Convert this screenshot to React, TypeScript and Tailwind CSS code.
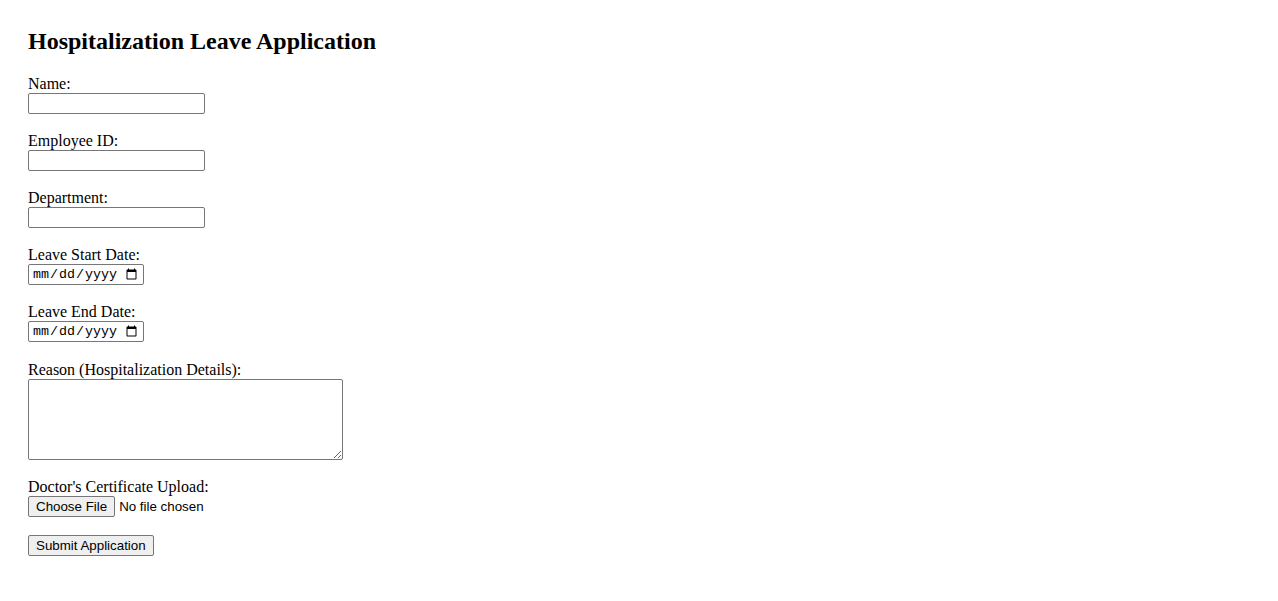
import React from 'react';

const fields = [
    { id: 'name', label: 'Name:', type: 'text' },
    { id: 'employeeId', label: 'Employee ID:', type: 'text' },
    { id: 'department', label: 'Department:', type: 'text' },
    { id: 'startDate', label: 'Leave Start Date:', type: 'date' },
    { id: 'endDate', label: 'Leave End Date:', type: 'date' },
];

const App: React.FC = () => {
    return (
        <div className="min-h-screen bg-white text-black px-[28px] pt-[27px] font-['Liberation_Serif',_'Times_New_Roman',_serif]">
            <h2 className="text-[24px] leading-[28px] font-bold mb-[21px]">Hospitalization Leave Application</h2>

            <form className="flex flex-col items-start" onSubmit={(e) => e.preventDefault()}>
                {fields.map((field, i) => (
                    <div key={field.id} className={i === fields.length - 1 ? 'flex flex-col items-start mb-[20px]' : 'flex flex-col items-start mb-[19px]'}>
                        <label htmlFor={field.id} className="block text-[16px] leading-[15px] pb-[2px]">{field.label}</label>
                        {field.type === 'date' ? (
                            <input
                                id={field.id}
                                type="date"
                                className="block w-[116px] h-[21px] border border-[#767676] rounded-[2px] pl-[3px] pr-[3px] text-[13.33px] font-['Liberation_Mono',_'Courier_New',_monospace] bg-white"
                            />
                        ) : (
                            <input
                                id={field.id}
                                type="text"
                                className="block w-[177px] h-[21px] border border-[#767676] rounded-[2px] px-[2px] text-[13.33px] font-['Liberation_Sans',_Arial,_sans-serif] bg-white"
                            />
                        )}
                    </div>
                ))}

                <div className="flex flex-col items-start mb-[19px]">
                    <label htmlFor="reason" className="block text-[16px] leading-[15px] pb-[2px]">Reason (Hospitalization Details):</label>
                    <textarea
                        id="reason"
                        className="block w-[315px] h-[81px] border border-[#767676] rounded-[2px] p-[2px] text-[13.33px] font-['Liberation_Mono',_'Courier_New',_monospace] resize bg-white"
                    />
                </div>

                <div className="flex flex-col items-start mb-[18px]">
                    <label htmlFor="certificate" className="block text-[16px] leading-[15px] pb-[2px]">Doctor's Certificate Upload:</label>
                    <input
                        id="certificate"
                        type="file"
                        className="block h-[21px] text-[13.33px] leading-[19px] font-['Liberation_Sans',_Arial,_sans-serif] file:h-[21px] file:mr-[4px] file:px-[7px] file:border file:border-[#767676] file:rounded-[2px] file:bg-[#efefef] file:text-black file:text-[13.33px]"
                    />
                </div>

                <button
                    type="submit"
                    className="h-[21px] px-[7px] border border-[#767676] rounded-[2px] bg-[#efefef] text-[13.33px] leading-[17px] font-['Liberation_Sans',_Arial,_sans-serif]"
                >
                    Submit Application
                </button>
            </form>
        </div>
    );
};

export default App;
